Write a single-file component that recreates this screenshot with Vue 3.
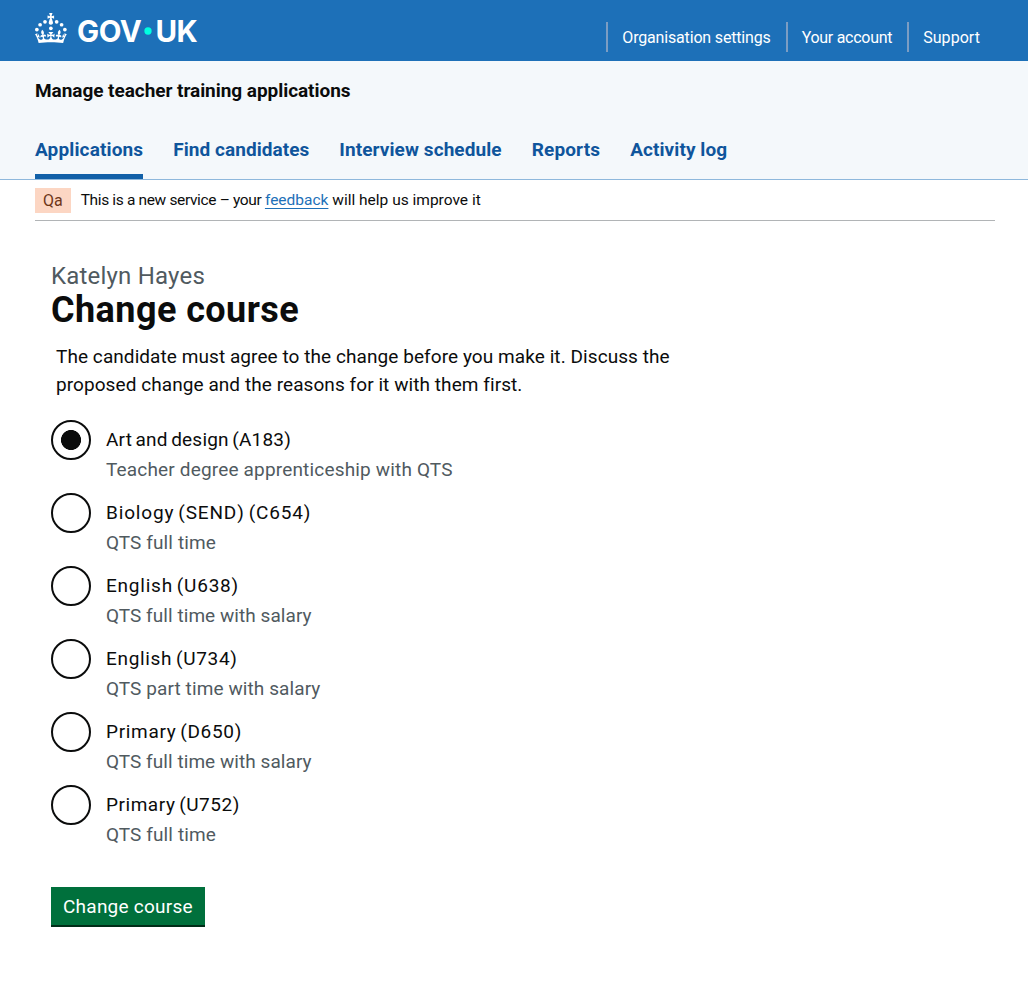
<script setup>
import { ref } from 'vue'

const accountLinks = [
  { text: 'Organisation settings', track: -0.17 },
  { text: 'Your account', track: -0.28 },
  { text: 'Support', track: 0.05 }
]

const sections = [
  { text: 'Applications', track: 0.14 },
  { text: 'Find candidates', track: 0.05 },
  { text: 'Interview schedule', track: 0.09 },
  { text: 'Reports', track: 0.14 },
  { text: 'Activity log', track: 0.08 }
]
const current = 'Applications'

const courses = [
  { code: 'A183', name: 'Art and design (A183)', hint: 'Teacher degree apprenticeship with QTS', track: 0.21, hintTrack: 0.17 },
  { code: 'C654', name: 'Biology (SEND) (C654)', hint: 'QTS full time', track: 0.84, hintTrack: 0.11 },
  { code: 'U638', name: 'English (U638)', hint: 'QTS full time with salary', track: 0.77, hintTrack: 0.06 },
  { code: 'U734', name: 'English (U734)', hint: 'QTS part time with salary', track: 0.67, hintTrack: 0.1 },
  { code: 'D650', name: 'Primary (D650)', hint: 'QTS full time with salary', track: 0.68, hintTrack: 0.06 },
  { code: 'U752', name: 'Primary (U752)', hint: 'QTS full time', track: 0.54, hintTrack: 0.11 }
]
const selected = ref('A183')

const tracking = (px) => ({ letterSpacing: `${px}px` })
</script>

<template>
  <div class="page">
    <header class="header">
      <a class="logo" aria-label="GOV.UK">
        <svg viewBox="0 0 324 60" width="162" height="30" fill="#fff">
          <circle cx="20" cy="17.6" r="3.7" />
          <circle cx="10.2" cy="23.5" r="3.7" />
          <circle cx="3.7" cy="33.2" r="3.7" />
          <circle cx="31.7" cy="30.6" r="3.7" />
          <circle cx="43.3" cy="17.6" r="3.7" />
          <circle cx="53.2" cy="23.5" r="3.7" />
          <circle cx="59.7" cy="33.2" r="3.7" />
          <path d="M33.1,9.8c.2-.1.3-.3.5-.5l4.6,2.4v-6.8l-4.6,1.5c-.1-.2-.3-.3-.5-.5l1.9-5.9h-6.7l1.9,5.9c-.2.1-.3.3-.5.5l-4.6-1.5v6.8l4.6-2.4c.1.2.3.3.5.5l-2.6,8c-.9,2.8,1.2,5.7,4.1,5.7h0c3,0,5.1-2.9,4.1-5.7l-2.6-8ZM37,37.9s-3.4,3.8-4.1,6.1c2.2,0,4.2-.5,6.4-2.8l-.7,8.5c-2-2.8-4.4-4.1-5.7-3.8.1,3.1.5,6.7,5.8,7.2,3.7.3,6.7-1.5,7-3.8.4-2.6-2-4.3-3.7-1.6-1.4-4.5,2.4-6.1,4.9-3.2-1.9-4.5-1.8-7.7,2.4-10.9,3,4,2.6,7.3-1.2,11.1,2.4-1.3,6.2,0,4,4.6-1.2-2.8-3.7-2.2-4.2.2-.3,1.7.7,3.7,3,4.2,1.9.3,4.7-.9,7-5.9-1.3,0-2.4.7-3.9,1.7l2.4-8c.6,2.3,1.4,3.7,2.2,4.5.6-1.6.5-2.8,0-5.3l5,1.8c-2.6,3.6-5.2,8.7-7.3,17.5-7.4-1.1-15.7-1.7-24.5-1.7h0c-8.8,0-17.1.6-24.5,1.7-2.1-8.9-4.7-13.9-7.3-17.5l5-1.8c-.5,2.5-.6,3.7,0,5.3.8-.8,1.6-2.3,2.2-4.5l2.4,8c-1.5-1-2.6-1.7-3.9-1.7,2.3,5,5.2,6.2,7,5.9,2.3-.4,3.3-2.4,3-4.2-.5-2.4-3-3.1-4.2-.2-2.2-4.6,1.6-6,4-4.6-3.7-3.7-4.2-7.1-1.2-11.1,4.2,3.2,4.3,6.4,2.4,10.9,2.5-2.8,6.3-1.3,4.9,3.2-1.8-2.7-4.1-1-3.7,1.6.3,2.3,3.3,4.1,7,3.8,5.4-.5,5.7-4.2,5.8-7.2-1.3-.2-3.7,1-5.7,3.8l-.7-8.5c2.2,2.3,4.2,2.7,6.4,2.8-.7-2.3-4.1-6.1-4.1-6.1h10.6,0Z" />
          <text class="wordmark" x="84" y="57">GOV</text>
          <circle class="dot" cx="226" cy="36" r="7.3" />
          <text class="wordmark" x="241" y="57">UK</text>
        </svg>
      </a>
      <nav class="account">
        <a v-for="link in accountLinks" :key="link.text" :style="tracking(link.track)">{{ link.text }}</a>
      </nav>
    </header>

    <div class="service">
      <div class="service-name">Manage teacher training applications</div>
      <nav class="sections">
        <a
          v-for="item in sections"
          :key="item.text"
          :class="{ active: item.text === current }"
          :style="tracking(item.track)"
        >{{ item.text }}</a>
      </nav>
    </div>

    <div class="phase">
      <strong class="tag">Qa</strong>
      <p class="phase-text"><span class="tight">This is a new service – your </span><a class="link">feedback</a> will help us improve it</p>
    </div>

    <main class="main">
      <span class="caption">Katelyn Hayes</span>
      <h1 class="title">Change course</h1>
      <p class="intro">The candidate must agree to the change before you make it. Discuss the proposed change and the reasons for it with them first.</p>

      <form class="form" @submit.prevent>
        <div class="radios">
          <label v-for="course in courses" :key="course.code" class="option">
            <input v-model="selected" class="radio" type="radio" name="course" :value="course.code" />
            <span class="text">
              <span class="name" :style="tracking(course.track)">{{ course.name }}</span>
              <span class="hint" :style="tracking(course.hintTrack)">{{ course.hint }}</span>
            </span>
          </label>
        </div>
        <button class="button">Change course</button>
      </form>
    </main>
  </div>
</template>

<style>
body {
  background: #fff;
}
</style>

<style scoped>
.page {
  min-height: 1004px;
  color: #0b0c0c;
  font-family: Roboto, "Liberation Sans", sans-serif;
  font-size: 19px;
}

.header {
  display: flex;
  justify-content: space-between;
  box-sizing: border-box;
  height: 61px;
  padding: 13px 48px 0 35px;
  background: #1d70b8;
}

.logo svg {
  display: block;
  overflow: visible;
}

.wordmark {
  font-family: Inter, sans-serif;
  font-size: 59px;
  font-weight: 700;
  letter-spacing: -1px;
}

.dot {
  fill: #00ffe0;
}

.account {
  display: flex;
  height: 30px;
  margin-top: 9px;
}

.account a {
  box-sizing: border-box;
  height: 30px;
  padding: 1px 15px 0 14px;
  border-left: 2px solid #7b9dc3;
  color: #fff;
  font-size: 16px;
  line-height: 30px;
}

.account a:last-child {
  padding-right: 0;
}

.service {
  display: flex;
  flex-direction: column;
  justify-content: space-between;
  box-sizing: border-box;
  height: 119px;
  padding: 15px 35px 0;
  background: #f4f8fb;
  border-bottom: 1px solid #8eb8dc;
  font-weight: 700;
}

.service-name {
  color: #0b0c0c;
  line-height: 30px;
  letter-spacing: -0.05px;
}

.sections {
  display: flex;
  gap: 30px;
}

.sections a {
  padding: 9px 0;
  border-bottom: 5px solid transparent;
  color: #0f559c;
  line-height: 30px;
}

.sections .active {
  border-color: #1160a8;
}

.phase {
  display: flex;
  align-items: center;
  gap: 10px;
  margin: 0 33px 0 35px;
  padding: 8px 0 7px;
  border-bottom: 1px solid #b1b4b6;
}

.tag {
  padding: 0 8px;
  background: #fcd6c3;
  color: #6e3619;
  font-size: 16px;
  font-weight: 400;
  line-height: 25px;
}

.phase-text {
  margin: 0;
  font-size: 15.5px;
  line-height: 25px;
}

.tight {
  letter-spacing: -0.35px;
}

.link {
  color: #1d70b8;
  text-decoration: underline;
  text-decoration-skip-ink: none;
  text-decoration-thickness: 1px;
  text-underline-offset: 3px;
}

.main {
  padding: 40px 51px 0;
}

.caption {
  display: block;
  color: #505a5f;
  font-size: 24px;
  line-height: 30px;
  letter-spacing: 0.2px;
}

.title {
  margin: 0;
  font-size: 36px;
  line-height: 38px;
  letter-spacing: 0.43px;
}

.intro {
  max-width: 630px;
  margin: 14px 0 0 5px;
  line-height: 28px;
  letter-spacing: 0.07px;
}

.radios {
  display: flex;
  flex-direction: column;
  gap: 8px;
  margin-top: 21px;
}

.option {
  display: flex;
  gap: 15px;
  height: 65px;
}

.radio {
  appearance: none;
  flex: none;
  box-sizing: border-box;
  width: 40px;
  height: 40px;
  margin: 0;
  border: 2px solid #0b0c0c;
  border-radius: 50%;
}

.radio:checked {
  background: radial-gradient(circle, #0b0c0c 9.7px, transparent 10.3px);
}

.text {
  display: flex;
  flex-direction: column;
  padding-top: 5px;
  line-height: 30px;
}

.name {
  word-spacing: -1.5px;
}

.hint {
  color: #505a5f;
}

.button {
  display: block;
  height: 40px;
  margin-top: 37px;
  padding: 0 12px;
  border: 0;
  border-bottom: 2px solid #002d18;
  background: #00703c;
  color: #fff;
  font: inherit;
  letter-spacing: 0.24px;
}
</style>
